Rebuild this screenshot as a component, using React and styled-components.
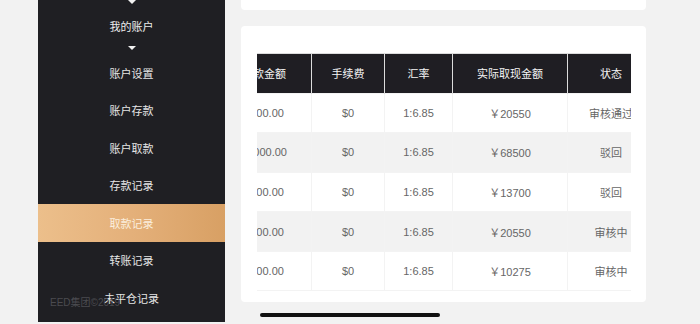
import { useLayoutEffect, useRef } from 'react';
import styled, { createGlobalStyle } from 'styled-components';

const GlobalStyle = createGlobalStyle`
    html, body {
        margin: 0;
        padding: 0;
        background: #f2f2f2;
        font-family: "Liberation Sans", "Noto Sans CJK SC", sans-serif;
    }
`;

const Page = styled.div`
    display: flex;
    align-items: flex-start;
    height: 324px;
    padding-left: 38px;
    overflow: hidden;
`;

const Sidebar = styled.nav`
    position: relative;
    width: 187px;
    height: 322px;
    flex-shrink: 0;
    background: #1f1f23;
    display: flex;
    flex-direction: column;
    align-items: stretch;
    overflow: hidden;
`;

const Caret = styled.span`
    align-self: center;
    width: 0;
    height: 0;
    border-left: ${(p) => p.$size}px solid transparent;
    border-right: ${(p) => p.$size}px solid transparent;
    border-top: ${(p) => p.$size}px solid #f2f2f2;
    margin-top: ${(p) => p.$top}px;
`;

const AccountTitle = styled.div`
    margin-top: 16px;
    height: 14px;
    line-height: 14px;
    text-align: center;
    font-size: 11px;
    color: #ececec;
`;

const MenuList = styled.ul`
    list-style: none;
    margin: 4px 0 0;
    padding: 0;
`;

const MenuItem = styled.li`
    height: 37.5px;
    display: flex;
    align-items: center;
    justify-content: center;
    font-size: 11px;
    color: ${(p) => (p.$active ? '#fbeedd' : '#e6e6e6')};
    background: ${(p) =>
        p.$active ? 'linear-gradient(90deg, #ecbf8b 0%, #e4b07a 50%, #d8a064 100%)' : 'transparent'};
`;

const Copyright = styled.div`
    position: absolute;
    left: 12px;
    bottom: 13px;
    font-size: 10px;
    color: #4b4b50;
`;

const Main = styled.main`
    flex: 1;
    min-width: 0;
    padding: 0 54px 0 16px;
    display: flex;
    flex-direction: column;
    gap: 16px;
`;

const TopCard = styled.div`
    height: 10px;
    background: #fff;
    border-radius: 0 0 4px 4px;
`;

const Card = styled.section`
    height: 276px;
    box-sizing: border-box;
    background: #fff;
    border-radius: 4px;
    padding: 27px 15px 0 16px;
`;

const TableScroll = styled.div`
    width: 100%;
    overflow-x: auto;
    scrollbar-width: none;
    &::-webkit-scrollbar {
        display: none;
    }
`;

const Table = styled.table`
    border-collapse: collapse;
    table-layout: fixed;
    width: 435px;
    font-size: 11px;
`;

const Th = styled.th`
    width: ${(p) => p.$w}px;
    height: 38.5px;
    padding: 0;
    background: #1f1e23;
    color: #f4f4f4;
    font-weight: 400;
    text-align: center;
    white-space: nowrap;
    border: 1px solid #dcdcdc;
    border-bottom: none;
`;

const Row = styled.tr`
    background: ${(p) => (p.$striped ? '#f2f2f2' : '#fff')};
`;

const Td = styled.td`
    height: 38.6px;
    padding: 0;
    color: #666;
    text-align: center;
    white-space: nowrap;
    border: 1px solid #f3f3f3;
`;

const HomeIndicator = styled.div`
    position: fixed;
    left: 50%;
    bottom: 7px;
    width: 180px;
    height: 4px;
    margin-left: -90px;
    border-radius: 2px;
    background: #111;
`;

const menu = ['账户设置', '账户存款', '账户取款', '存款记录', '取款记录', '转账记录', '未平仓记录'];

const columns = [
    { title: '取款金额', w: 94 },
    { title: '手续费', w: 72 },
    { title: '汇率', w: 67 },
    { title: '实际取现金额', w: 114 },
    { title: '状态', w: 86 },
];

const rows = [
    ['3000.00', '$0', '1:6.85', '￥20550', '审核通过'],
    ['10000.00', '$0', '1:6.85', '￥68500', '驳回'],
    ['2000.00', '$0', '1:6.85', '￥13700', '驳回'],
    ['3000.00', '$0', '1:6.85', '￥20550', '审核中'],
    ['1500.00', '$0', '1:6.85', '￥10275', '审核中'],
];

function App() {
    const scrollRef = useRef(null);

    useLayoutEffect(() => {
        // the list is shown scrolled sideways, first column half out of view
        if (scrollRef.current) scrollRef.current.scrollLeft = 41;
    }, []);

    return (
        <>
            <GlobalStyle />
            <Page>
                <Sidebar>
                    <Caret $size={4} $top={0} />
                    <AccountTitle>我的账户</AccountTitle>
                    <Caret $size={4} $top={12} />
                    <MenuList>
                        {menu.map((item) => (
                            <MenuItem key={item} $active={item === '取款记录'}>
                                {item}
                            </MenuItem>
                        ))}
                    </MenuList>
                    <Copyright>EED集团©2019</Copyright>
                </Sidebar>
                <Main>
                    <TopCard />
                    <Card>
                        <TableScroll ref={scrollRef}>
                            <Table>
                                <thead>
                                    <tr>
                                        {columns.map((c) => (
                                            <Th key={c.title} $w={c.w}>
                                                {c.title}
                                            </Th>
                                        ))}
                                    </tr>
                                </thead>
                                <tbody>
                                    {rows.map((r, i) => (
                                        <Row key={i} $striped={i % 2 === 1}>
                                            {r.map((cell, j) => (
                                                <Td key={j}>{cell}</Td>
                                            ))}
                                        </Row>
                                    ))}
                                </tbody>
                            </Table>
                        </TableScroll>
                    </Card>
                </Main>
            </Page>
            <HomeIndicator />
        </>
    );
}

export default App;
